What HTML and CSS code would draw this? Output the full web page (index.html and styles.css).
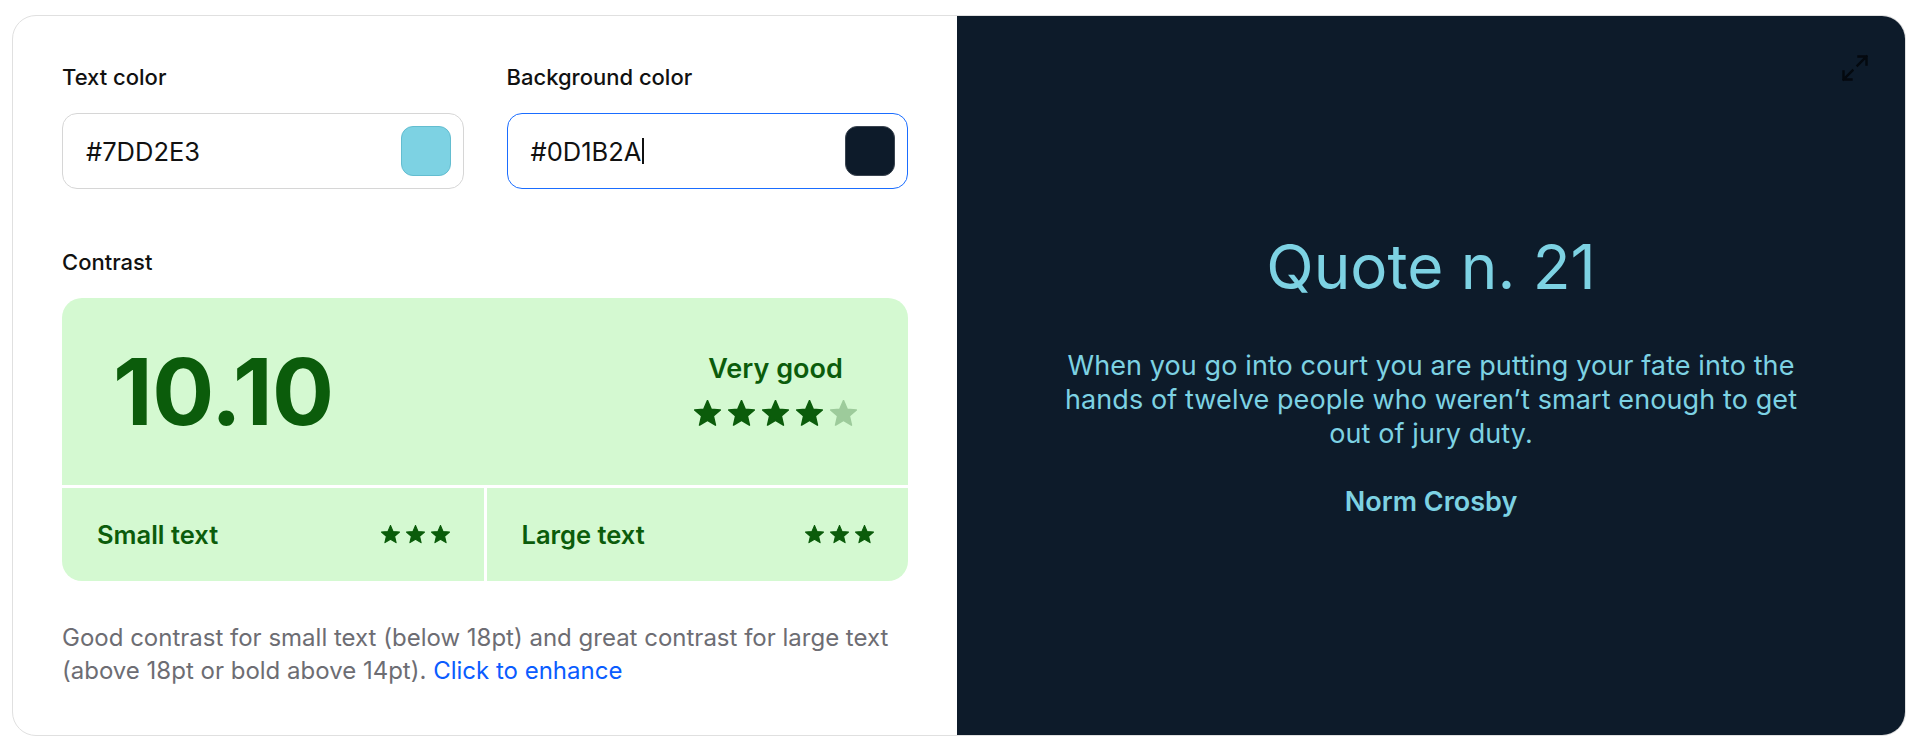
FILE: index.html
```html
<!DOCTYPE html>
<html lang="en">
<head>
    <meta charset="UTF-8">
    <meta name="viewport" content="width=device-width, initial-scale=1.0">
    <title>Contrast checker</title>
    <link rel="stylesheet" href="styles.css">
</head>
<body>
    <div class="card">
        <section class="controls">
            <div class="pickers">
                <div class="picker">
                    <label class="label">Text color</label>
                    <div class="field">
                        <span class="field-value">#7DD2E3</span>
                        <span class="swatch swatch-text"></span>
                    </div>
                </div>
                <div class="picker">
                    <label class="label">Background color</label>
                    <div class="field is-active">
                        <span class="field-value">#0D1B2A</span><span class="caret"></span>
                        <span class="swatch swatch-bg"></span>
                    </div>
                </div>
            </div>

            <h3 class="label contrast-label">Contrast</h3>
            <div class="score">
                <div class="score-main">
                    <span class="ratio">10.10</span>
                    <div class="rating">
                        <span class="rating-text">Very good</span>
                        <div class="stars stars-lg">
                            <svg viewBox="1.5 1.5 21 21"><path d="M12 17.27L18.18 21l-1.64-7.03L22 9.24l-7.19-.61L12 2 9.19 8.63 2 9.24l5.46 4.73L5.82 21z"/></svg>
                            <svg viewBox="1.5 1.5 21 21"><path d="M12 17.27L18.18 21l-1.64-7.03L22 9.24l-7.19-.61L12 2 9.19 8.63 2 9.24l5.46 4.73L5.82 21z"/></svg>
                            <svg viewBox="1.5 1.5 21 21"><path d="M12 17.27L18.18 21l-1.64-7.03L22 9.24l-7.19-.61L12 2 9.19 8.63 2 9.24l5.46 4.73L5.82 21z"/></svg>
                            <svg viewBox="1.5 1.5 21 21"><path d="M12 17.27L18.18 21l-1.64-7.03L22 9.24l-7.19-.61L12 2 9.19 8.63 2 9.24l5.46 4.73L5.82 21z"/></svg>
                            <svg class="off" viewBox="1.5 1.5 21 21"><path d="M12 17.27L18.18 21l-1.64-7.03L22 9.24l-7.19-.61L12 2 9.19 8.63 2 9.24l5.46 4.73L5.82 21z"/></svg>
                        </div>
                    </div>
                </div>
                <div class="score-cell">
                    <span>Small text</span>
                    <div class="stars stars-sm">
                        <svg viewBox="1.5 1.5 21 21"><path d="M12 17.27L18.18 21l-1.64-7.03L22 9.24l-7.19-.61L12 2 9.19 8.63 2 9.24l5.46 4.73L5.82 21z"/></svg>
                        <svg viewBox="1.5 1.5 21 21"><path d="M12 17.27L18.18 21l-1.64-7.03L22 9.24l-7.19-.61L12 2 9.19 8.63 2 9.24l5.46 4.73L5.82 21z"/></svg>
                        <svg viewBox="1.5 1.5 21 21"><path d="M12 17.27L18.18 21l-1.64-7.03L22 9.24l-7.19-.61L12 2 9.19 8.63 2 9.24l5.46 4.73L5.82 21z"/></svg>
                    </div>
                </div>
                <div class="score-cell">
                    <span>Large text</span>
                    <div class="stars stars-sm">
                        <svg viewBox="1.5 1.5 21 21"><path d="M12 17.27L18.18 21l-1.64-7.03L22 9.24l-7.19-.61L12 2 9.19 8.63 2 9.24l5.46 4.73L5.82 21z"/></svg>
                        <svg viewBox="1.5 1.5 21 21"><path d="M12 17.27L18.18 21l-1.64-7.03L22 9.24l-7.19-.61L12 2 9.19 8.63 2 9.24l5.46 4.73L5.82 21z"/></svg>
                        <svg viewBox="1.5 1.5 21 21"><path d="M12 17.27L18.18 21l-1.64-7.03L22 9.24l-7.19-.61L12 2 9.19 8.63 2 9.24l5.46 4.73L5.82 21z"/></svg>
                    </div>
                </div>
            </div>

            <p class="hint">
                Good contrast for small text (below 18pt) and great contrast for large text
                (above 18pt or bold above 14pt). <a href="#" class="hint-link">Click to enhance</a>
            </p>
        </section>

        <section class="preview">
            <button class="expand" aria-label="Expand preview">
                <svg viewBox="0 0 28 28" fill="none" stroke="currentColor" stroke-width="2.4" stroke-linecap="square">
                    <path d="M17.5 2.5H25.5V10.5M25.5 2.5L16.5 11.5"/>
                    <path d="M2.5 17.5V25.5H10.5M2.5 25.5L11.5 16.5"/>
                </svg>
            </button>
            <h2 class="quote-title">Quote n. 21</h2>
            <p class="quote-text">When you go into court you are putting your fate into the hands of twelve people who weren’t smart enough to get out of jury duty.</p>
            <p class="quote-author">Norm Crosby</p>
        </section>
    </div>
</body>
</html>
```

FILE: styles.css
```css
body {
    margin: 0;
    background-color: #ffffff;
    font-family: 'Inter', 'Noto Sans', sans-serif;
    color: #111111;
}

.card {
    margin: 15px 14px 0 12px;
    height: 721px;
    box-sizing: border-box;
    border: 1px solid #e0e0e0;
    border-radius: 24px;
    overflow: hidden;
    display: grid;
    grid-template-columns: 944px 1fr;
}

/* left side */

.controls {
    padding: 45px 49px 0 49px;
}

.pickers {
    display: grid;
    grid-template-columns: 1fr 1fr;
    gap: 43px;
}

.label {
    display: block;
    font-size: 22px;
    font-weight: 500;
    line-height: 32px;
    margin: 0 0 20px;
}

.field {
    height: 76px;
    box-sizing: border-box;
    border: 1.5px solid #d6d6d6;
    border-radius: 15px;
    display: flex;
    align-items: center;
    padding: 0 12px 0 23px;
}

.field.is-active {
    border-color: #1a6dff;
}

.field-value {
    font-size: 25.5px;
}

.caret {
    width: 1.5px;
    height: 26px;
    margin-left: 1px;
    background-color: #111111;
}

.swatch {
    margin-left: auto;
    width: 50px;
    height: 50px;
    box-sizing: border-box;
    border-radius: 12px;
}

.swatch-text {
    background-color: #7dd2e3;
    border: 1px solid #63bdd0;
}

.swatch-bg {
    background-color: #0d1b2a;
    border: 1px solid #3a4450;
}

.contrast-label {
    margin-top: 57px;
}

.score {
    display: grid;
    grid-template-columns: 1fr 1fr;
    grid-template-rows: 187px 93px;
    gap: 3px;
    border-radius: 20px;
    overflow: hidden;
    color: #0b5c0b;
}

.score-main {
    grid-column: 1 / 3;
    background-color: #d4f9d1;
    display: flex;
    justify-content: space-between;
    align-items: center;
    padding: 0 51px 0 51px;
}

.ratio {
    font-size: 92px;
    font-weight: 700;
    letter-spacing: -0.5px;
}

.rating {
    display: flex;
    flex-direction: column;
    align-items: center;
    gap: 15px;
    margin-bottom: 4px;
}

.rating-text {
    font-size: 27px;
    font-weight: 600;
}

.stars {
    display: flex;
    gap: 7px;
}

.stars svg {
    fill: #0b5c0b;
    stroke: #0b5c0b;
    stroke-width: 1.2;
    stroke-linejoin: round;
}

.stars svg.off {
    fill: #9dcb9b;
    stroke: #9dcb9b;
}

.stars-lg svg {
    width: 27px;
    height: 27px;
}

.stars-sm {
    gap: 6px;
}

.stars-sm svg {
    width: 19px;
    height: 19px;
}

.score-cell {
    background-color: #d4f9d1;
    display: flex;
    justify-content: space-between;
    align-items: center;
    padding: 0 34px 0 35px;
    font-size: 25.5px;
    font-weight: 600;
}

.hint {
    margin: 40px -20px 0 0;
    font-size: 24px;
    line-height: 33px;
    color: #6d6d73;
}

.hint-link {
    color: #0a5cff;
    text-decoration: none;
}

/* right side */

.preview {
    position: relative;
    background-color: #0d1b2a;
    color: #7dd2e3;
    display: flex;
    flex-direction: column;
    align-items: center;
    justify-content: center;
    text-align: center;
    padding-bottom: 2px;
}

.expand {
    position: absolute;
    top: 38px;
    right: 36px;
    width: 28px;
    height: 28px;
    padding: 0;
    border: none;
    background: none;
    color: #04090f;
    cursor: pointer;
}

.expand svg {
    width: 28px;
    height: 28px;
    display: block;
}

.quote-title {
    margin: 0;
    font-size: 62px;
    font-weight: 400;
    line-height: 72px;
}

.quote-text {
    max-width: 760px;
    margin: 46px 0 0;
    font-size: 27px;
    letter-spacing: 0.1px;
    line-height: 34px;
}

.quote-author {
    margin: 34px 0 0;
    font-size: 27px;
    font-weight: 600;
}
```
